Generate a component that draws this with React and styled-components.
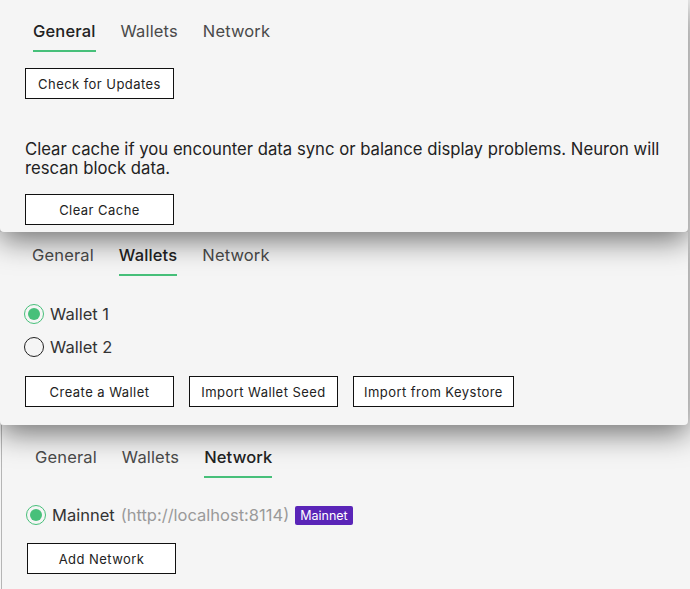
import React from "react";
import styled, { createGlobalStyle } from "styled-components";

const GlobalStyle = createGlobalStyle`
  html, body {
    margin: 0;
    padding: 0;
    background: #f5f5f5;
    font-family: Inter, "Noto Sans", sans-serif;
    color: #222;
  }
  body {
    width: 690px;
    height: 589px;
    overflow: hidden;
  }
`;

const Stack = styled.div`
  display: flex;
  flex-direction: column;
  width: 690px;
`;

const Panel = styled.section`
  position: relative;
  z-index: ${(props) => props.layer};
  box-sizing: border-box;
  width: ${(props) => props.width || "688px"};
  height: ${(props) => props.height};
  padding: ${(props) => props.pad} 0 0 25px;
  background: #f5f5f5;
  border-radius: 0 0 4px 4px;
  box-shadow: ${(props) =>
    props.flat ? "none" : "0 8px 30px rgba(0, 0, 0, 0.55)"};
  border-left: ${(props) => (props.edge ? "1px solid #b5b5b5" : "none")};
  margin-left: ${(props) => (props.edge ? "1px" : "0")};
`;

const Tabs = styled.nav`
  display: flex;
  gap: 25px;
  padding-left: ${(props) => props.indent || "8px"};
`;

const Tab = styled.div`
  font-size: 16.5px;
  line-height: 22px;
  letter-spacing: 0.15px;
  padding-bottom: 8px;
  color: ${(props) => (props.active ? "#222" : "#4a4a4a")};
  font-weight: ${(props) => (props.active ? 500 : 400)};
  border-bottom: 2px solid
    ${(props) => (props.active ? "#47c07a" : "transparent")};
`;

const Button = styled.button`
  box-sizing: border-box;
  min-width: 149px;
  height: 31px;
  padding: 0 10px;
  background: #fff;
  border: 1px solid #111;
  border-radius: 0;
  font-family: Inter, "Noto Sans", sans-serif;
  font-size: 13px;
  letter-spacing: 0.45px;
  color: #222;
`;

const ButtonRow = styled.div`
  display: flex;
  gap: 15px;
  margin-top: ${(props) => props.top};
`;

const Note = styled.p`
  margin: 41px 0 16px;
  width: 662px;
  font-size: 16.7px;
  line-height: 19px;
  color: #222;
`;

const RadioList = styled.div`
  display: flex;
  flex-direction: column;
  gap: 11px;
  margin-top: ${(props) => props.top};
`;

const RadioRow = styled.label`
  display: flex;
  align-items: center;
  gap: 6px;
  height: 22px;
  font-size: 16.5px;
  color: #333;
`;

const RadioMark = styled.span`
  box-sizing: border-box;
  width: 20px;
  height: 20px;
  border-radius: 50%;
  border: 1.5px solid ${(props) => (props.checked ? "#47c07a" : "#222")};
  display: flex;
  align-items: center;
  justify-content: center;
  margin-left: -1px;
  &::after {
    content: "";
    width: 12px;
    height: 12px;
    border-radius: 50%;
    background: ${(props) => (props.checked ? "#47c07a" : "transparent")};
  }
`;

const Url = styled.span`
  color: #9a9a9a;
`;

const Badge = styled.span`
  display: inline-flex;
  align-items: center;
  height: 19px;
  padding: 0 5px;
  background: #5a25b8;
  color: #fff;
  font-size: 12.5px;
  border-radius: 2px;
`;

function TabBar({ active, indent }) {
  return (
    <Tabs indent={indent}>
      {["General", "Wallets", "Network"].map((name) => (
        <Tab key={name} active={name === active}>
          {name}
        </Tab>
      ))}
    </Tabs>
  );
}

export default function App() {
  return (
    <Stack>
      <GlobalStyle />
      <Panel layer={3} height="232px" pad="20px">
        <TabBar active="General" />
        <ButtonRow top="16px">
          <Button>Check for Updates</Button>
        </ButtonRow>
        <Note>
          Clear cache if you encounter data sync or balance display problems.
          Neuron will rescan block data.
        </Note>
        <ButtonRow>
          <Button>Clear Cache</Button>
        </ButtonRow>
      </Panel>
      <Panel layer={2} height="193px" pad="12px">
        <TabBar active="Wallets" indent="7px" />
        <RadioList top="27px">
          <RadioRow>
            <RadioMark checked />
            Wallet 1
          </RadioRow>
          <RadioRow>
            <RadioMark />
            Wallet 2
          </RadioRow>
        </RadioList>
        <ButtonRow top="18px">
          <Button>Create a Wallet</Button>
          <Button>Import Wallet Seed</Button>
          <Button>Import from Keystore</Button>
        </ButtonRow>
      </Panel>
      <Panel layer={1} height="170px" pad="21px" width="689px" edge flat>
        <TabBar active="Network" indent="8px" />
        <RadioList top="26px">
          <RadioRow>
            <RadioMark checked />
            Mainnet <Url>(http://localhost:8114)</Url>
            <Badge>Mainnet</Badge>
          </RadioRow>
        </RadioList>
        <ButtonRow top="17px">
          <Button>Add Network</Button>
        </ButtonRow>
      </Panel>
    </Stack>
  );
}
